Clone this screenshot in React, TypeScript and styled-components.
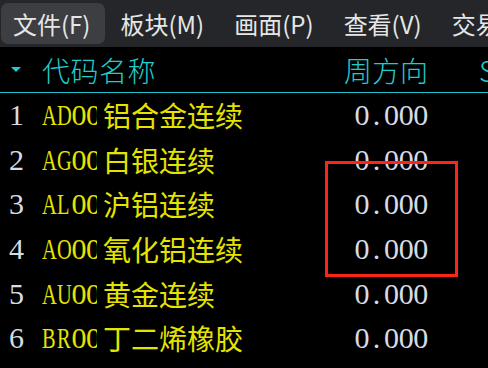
import styled, { createGlobalStyle } from "styled-components";

const GlobalStyle = createGlobalStyle`
  html, body {
    margin: 0;
    padding: 0;
    background: #000;
    overflow: hidden;
  }
`;

const menus = ["文件(F)", "板块(M)", "画面(P)", "查看(V)", "交易(T)"];

const rows = [
  { n: 1, code: "AD0001", name: "铝合金连续", value: "0.000" },
  { n: 2, code: "AG0001", name: "白银连续", value: "0.000" },
  { n: 3, code: "AL0001", name: "沪铝连续", value: "0.000" },
  { n: 4, code: "AO0001", name: "氧化铝连续", value: "0.000" },
  { n: 5, code: "AU0001", name: "黄金连续", value: "0.000" },
  { n: 6, code: "BR0001", name: "丁二烯橡胶", value: "0.000" },
  { n: 7, code: "BU0001", name: "沥青连续", value: "0.000" },
];

// half-width cells, like the old SimSun latin glyphs
function Mono({ text }: { text: string }) {
  return (
    <>
      {[...text].map((c, i) => (
        <Cell key={i} $wide={/[A-Z]/.test(c)}>
          {c}
        </Cell>
      ))}
    </>
  );
}

export default function App() {
  return (
    <Screen>
      <GlobalStyle />
      <MenuBar>
        {menus.map((m, i) => (
          <MenuItem key={m} $active={i === 0}>
            {m}
          </MenuItem>
        ))}
      </MenuBar>
      <Table>
        <HeaderRow>
          <IndexCol>
            <SortArrow />
          </IndexCol>
          <HeadTitle>代码名称</HeadTitle>
          <HeadValue>周方向</HeadValue>
          <HeadExtra>SAR</HeadExtra>
        </HeaderRow>
        {rows.map((r) => (
          <Row key={r.n}>
            <IndexCol>
              <Mono text={String(r.n)} />
            </IndexCol>
            <Code>
              <Mono text={r.code} />
            </Code>
            <Name>{r.name}</Name>
            <Value>
              <Mono text={r.value} />
            </Value>
          </Row>
        ))}
        <Marker />
      </Table>
    </Screen>
  );
}

const Screen = styled.div`
  width: 488px;
  height: 368px;
  overflow: hidden;
  background: #000;
`;

const MenuBar = styled.div`
  height: 47px;
  background: #24262a;
  display: flex;
  align-items: center;
  gap: 3px;
  padding-left: 1px;
  white-space: nowrap;
`;

const MenuItem = styled.div<{ $active?: boolean }>`
  height: 41px;
  line-height: 41px;
  padding: 0 15px 0 12px;
  border-radius: 7px;
  font-family: "Noto Sans CJK SC", "Noto Sans", sans-serif;
  font-size: 24px;
  color: #e6e6e6;
  background: ${(p) => (p.$active ? "#3c3e42" : "transparent")};
  flex-shrink: 0;
`;

const Table = styled.div`
  position: relative;
`;

const HeaderRow = styled.div`
  height: 45px;
  display: flex;
  align-items: center;
  border-bottom: 1px solid #1ec4cc;
  font-family: "Noto Sans CJK SC", "Noto Sans", sans-serif;
  font-size: 28px;
  font-weight: 300;
  color: #20cccc;
  white-space: nowrap;
`;

const IndexCol = styled.div`
  width: 42px;
  padding-left: 9px;
  box-sizing: border-box;
  flex-shrink: 0;
  font-family: "Liberation Serif", serif;
  font-size: 30px;
  color: #d6dce6;
`;

const SortArrow = styled.div`
  width: 0;
  height: 0;
  margin-left: 2px;
  border-left: 5.5px solid transparent;
  border-right: 5.5px solid transparent;
  border-top: 5px solid #20cccc;
`;

const HeadTitle = styled.div`
  width: 236px;
  flex-shrink: 0;
  letter-spacing: 0.5px;
`;

const HeadValue = styled.div`
  width: 150px;
  flex-shrink: 0;
  text-align: right;
`;

const HeadExtra = styled.div`
  margin-left: 51px;
  flex-shrink: 0;
`;

const Row = styled.div`
  height: 44.6px;
  display: flex;
  align-items: center;
  white-space: nowrap;
`;

const Code = styled.div`
  width: 55px;
  overflow: hidden;
  flex-shrink: 0;
  font-family: "Liberation Serif", serif;
  font-size: 30px;
  color: #e4e400;
`;

const Name = styled.div`
  width: 175px;
  margin-left: 6px;
  flex-shrink: 0;
  font-family: "Noto Sans CJK SC", "Noto Sans", sans-serif;
  font-size: 28px;
  color: #e4e400;
`;

const Value = styled.div`
  width: 150px;
  text-align: right;
  flex-shrink: 0;
  font-family: "Liberation Serif", serif;
  font-size: 30px;
  color: #d6dce6;
`;

const Cell = styled.span<{ $wide?: boolean }>`
  display: inline-block;
  width: 0.49em;
  text-align: center;
  ${(p) => p.$wide && "transform: scaleX(0.68); transform-origin: left center; text-align: left;"}
`;

/* red annotation box drawn over the table */
const Marker = styled.div`
  position: absolute;
  left: 325px;
  top: 114px;
  width: 133px;
  height: 116px;
  box-sizing: border-box;
  border: 3px solid #ff2419;
`;
